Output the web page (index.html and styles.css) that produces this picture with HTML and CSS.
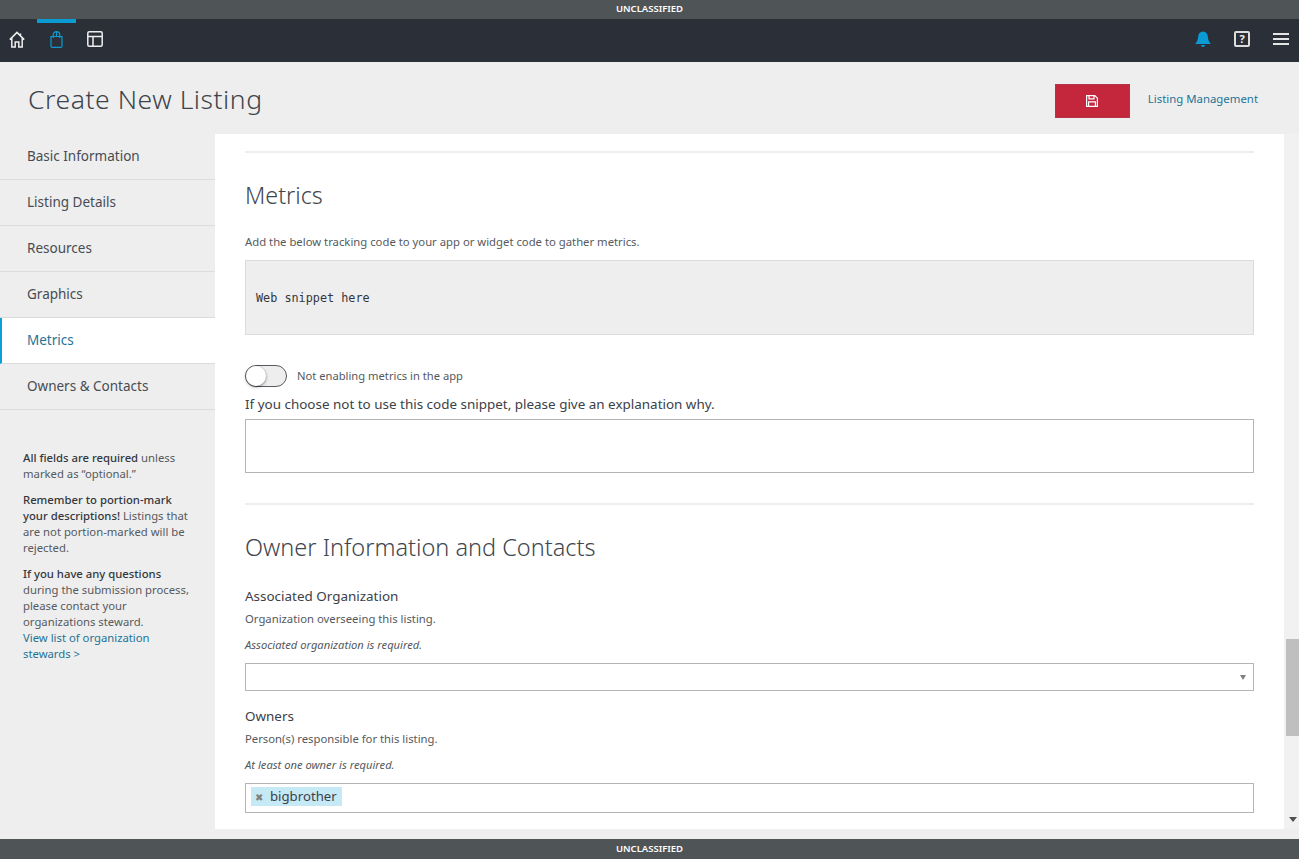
FILE: index.html
```html
<!DOCTYPE html>
<html lang="en">
<head>
    <meta charset="UTF-8">
    <meta name="viewport" content="width=device-width, initial-scale=1.0">
    <title>Create New Listing</title>
    <link rel="stylesheet" href="styles.css">
</head>
<body>
    <div class="banner">UNCLASSIFIED</div>
    <nav class="topnav">
        <div class="nav-left">
            <a class="nav-item">
                <svg width="16" height="17" viewBox="0 0 16 17" fill="none" stroke="#eee" stroke-width="1.5"><path d="M.8 8.6 8 1.4l7.2 7.2M2.8 7v9h3.4v-5h3.6v5h3.4V7M11.5 2.5v2.6"/></svg>
            </a>
            <a class="nav-item active">
                <svg width="13" height="17" viewBox="0 0 13 17" fill="none" stroke="#0a9bd3" stroke-width="1.2"><path d="M1 5.5h11v9.7a1.2 1.2 0 0 1-1.2 1.2H2.2A1.2 1.2 0 0 1 1 15.200zM3.300 7V3.500a3.200 2.900 0 0 1 6.400 0V7M6.500 1v4"/></svg>
            </a>
            <a class="nav-item">
                <svg width="16" height="16" viewBox="0 0 16 16" fill="none" stroke="#eee" stroke-width="1.5"><rect x=".8" y=".8" width="14.400" height="14.400" rx="1.500"/><path d="M.8 5.500h14.400M6 5.500v9.700"/></svg>
            </a>
        </div>
        <div class="nav-right">
            <svg width="16" height="16" viewBox="0 0 16 16" fill="#0a9bd3"><path d="M8 .5c3 0 4.600 2.200 4.800 5 .2 3.200 1 5.200 3 7.500H.2c2-2.300 2.800-4.300 3-7.500C3.400 2.700 5 .5 8 .5zM6 14h4a2 2 0 0 1-4 0z"/></svg>
            <span class="help-icon">?</span>
            <span class="burger"><i></i><i></i><i></i></span>
        </div>
    </nav>

    <header class="page-head">
        <h1>Create New Listing</h1>
        <div class="head-actions">
            <button class="save-btn" type="button">
                <svg width="12" height="12" viewBox="0 0 12 12" fill="none" stroke="#fff" stroke-width="1.200"><path d="M.6.6h8.200l2.600 2.600v8.200H.6zM3 .6v3.200h5V.6M2.600 11.400V6.800h6.800v4.600"/></svg>
            </button>
            <a class="manage-link">Listing Management</a>
        </div>
    </header>

    <div class="main">
        <aside class="sidebar">
            <ul class="side-menu">
                <li>Basic Information</li>
                <li>Listing Details</li>
                <li>Resources</li>
                <li>Graphics</li>
                <li class="current">Metrics</li>
                <li>Owners &amp; Contacts</li>
            </ul>
            <div class="side-note">
                <p><b>All fields are required</b> unless<br>marked as “optional.”</p>
                <p><b>Remember to portion-mark<br>your descriptions!</b> Listings that<br>are not portion-marked will be<br>rejected.</p>
                <p><b>If you have any questions</b><br>during the submission process,<br>please contact your<br>organizations steward.<br><a>View list of organization<br>stewards &gt;</a></p>
            </div>
        </aside>

        <section class="content">
            <hr class="rule first">
            <h2 class="metrics-title">Metrics</h2>
            <p class="help">Add the below tracking code to your app or widget code to gather metrics.</p>
            <pre class="snippet">Web snippet here</pre>
            <div class="toggle-row">
                <span class="toggle"><span class="knob"></span></span>
                <span class="toggle-label">Not enabling metrics in the app</span>
            </div>
            <label class="field-label why">If you choose not to use this code snippet, please give an explanation why.</label>
            <div class="textarea"></div>
            <hr class="rule second">
            <h2 class="owner-title">Owner Information and Contacts</h2>

            <label class="field-label">Associated Organization</label>
            <p class="help tight">Organization overseeing this listing.</p>
            <p class="error">Associated organization is required.</p>
            <div class="select"><span class="caret"></span></div>

            <label class="field-label owners">Owners</label>
            <p class="help tight">Person(s) responsible for this listing.</p>
            <p class="error">At least one owner is required.</p>
            <div class="tags"><span class="tag"><span class="tag-x">✖</span>bigbrother</span></div>
        </section>

        <div class="scrollbar">
            <span class="thumb"></span>
            <span class="arrow"></span>
        </div>
    </div>

    <div class="banner bottom">UNCLASSIFIED</div>
</body>
</html>
```

FILE: styles.css
```css
html, body {
    height: 100%;
}
body {
    margin: 0;
    height: 859px;
    overflow: hidden;
    display: flex;
    flex-direction: column;
    font-family: 'Noto Sans', 'Open Sans', sans-serif;
    background-color: #eee;
    color: #3c4148;
}
.banner {
    height: 19px;
    line-height: 18px;
    flex: none;
    background-color: #4f5557;
    color: #fff;
    text-align: center;
    font-size: 9.500px;
    font-weight: 600;
}
.banner.bottom {
    height: 20px;
    line-height: 20px;
    margin-top: 10px;
}

.topnav {
    height: 43px;
    flex: none;
    display: flex;
    justify-content: space-between;
    background-color: #2b3038;
}
.nav-left {
    display: flex;
}
.nav-item {
    width: 39px;
    display: flex;
    align-items: center;
    justify-content: center;
    border-top: 4px solid transparent;
    padding-bottom: 7px;
    box-sizing: border-box;
}
.nav-item:first-child {
    width: 37px;
    padding-right: 3px;
}
.nav-item:last-child {
    padding-right: 1px;
}
.nav-item.active {
    border-top-color: #0a9bd3;
}
.nav-right {
    display: flex;
    align-items: center;
    gap: 23px;
    padding-right: 10px;
    padding-bottom: 3px;
}
.help-icon {
    width: 12px;
    height: 12px;
    border: 2px solid #dcdcdc;
    border-radius: 2px;
    color: #eee;
    font-size: 11px;
    font-weight: 700;
    line-height: 12px;
    text-align: center;
}
.burger {
    width: 16px;
    display: flex;
    flex-direction: column;
    gap: 3px;
}
.burger i {
    height: 2px;
    background-color: #e4e4e4;
}

.page-head {
    height: 72px;
    flex: none;
    display: flex;
    justify-content: space-between;
    align-items: center;
    padding: 0 41px 0 28px;
}
h1 {
    margin: 1px 0 0;
    font-size: 26.500px;
    font-weight: 300;
    color: #3f444b;
    letter-spacing: .55px;
}
.head-actions {
    display: flex;
    align-items: center;
    gap: 18px;
}
.save-btn {
    width: 75px;
    height: 34px;
    margin-top: 6px;
    padding: 0;
    background-color: #c4273c;
    border: 1px solid #b3344a;
    display: flex;
    align-items: center;
    justify-content: center;
}
.manage-link {
    color: #1f7396;
    font-size: 11.400px;
}

.main {
    flex: 1;
    min-height: 0;
    display: flex;
    position: relative;
}
.sidebar {
    width: 215px;
    flex: none;
}
.side-menu {
    list-style: none;
    margin: 0;
    padding: 0;
}
.side-menu li {
    height: 45px;
    line-height: 44px;
    padding-left: 27px;
    border-bottom: 1px solid #dcdcdc;
    font-size: 13.500px;
    color: #474c53;
}
.side-menu li.current {
    background-color: #fff;
    color: #1f7396;
    border-left: 2px solid #0aa0d8;
    padding-left: 25px;
}
.side-note {
    margin-top: 40px;
    padding: 0 10px 0 23px;
    font-size: 11.300px;
    line-height: 16px;
    color: #555a60;
}
.side-note p {
    margin: 0 0 10px;
}
.side-note b {
    font-weight: 500;
    color: #33373d;
}
.side-note a {
    color: #1f7396;
}

.content {
    flex: 1;
    background-color: #fff;
    padding: 0 30px;
    overflow: hidden;
}
.rule {
    border: none;
    border-top: 2px solid #eee;
    margin: 0;
}
.rule.first {
    margin-top: 17px;
}
h2 {
    margin: 0;
    font-weight: 300;
    color: #41464d;
}
.metrics-title {
    font-size: 23.300px;
    line-height: 30px;
    margin-top: 27px;
}
.owner-title {
    font-size: 23.500px;
    line-height: 32px;
    margin-top: 26px;
}
.help {
    margin: 0;
    font-size: 11.300px;
    line-height: 16px;
    color: #555a60;
}
.metrics-title + .help {
    margin-top: 24px;
}
.snippet {
    margin: 10px 0 0;
    height: 75px;
    box-sizing: border-box;
    padding-left: 10px;
    line-height: 75px;
    background-color: #eee;
    border: 1px solid #dcdcdc;
    font-family: 'DejaVu Sans Mono', 'Liberation Mono', monospace;
    font-size: 11.800px;
    color: #33373d;
}
.toggle-row {
    display: flex;
    align-items: center;
    gap: 10px;
    margin-top: 30px;
}
.toggle {
    width: 42px;
    height: 22px;
    box-sizing: border-box;
    border: 1px solid #555a60;
    border-radius: 11px;
    background-color: #eee;
    display: block;
    position: relative;
}
.knob {
    position: absolute;
    left: 0;
    top: 0;
    width: 20px;
    height: 20px;
    border-radius: 50%;
    background-color: #fff;
    box-shadow: 0 1px 3px rgba(0, 0, 0, .5);
}
.toggle-label {
    font-size: 11.200px;
    color: #555a60;
    padding-bottom: 2px;
}
.field-label {
    display: block;
    font-size: 13.450px;
    line-height: 20px;
    color: #3c4148;
}
.field-label.why {
    margin-top: 7px;
}
.textarea {
    height: 54px;
    box-sizing: border-box;
    margin-top: 5px;
    border: 1px solid #b5b5b5;
}
.rule.second {
    margin-top: 30px;
}
.owner-title + .field-label {
    margin-top: 23px;
}
.help.tight {
    margin-top: 5px;
}
.error {
    margin: 10px 0 0;
    font-size: 11.200px;
    line-height: 16px;
    font-style: italic;
    color: #555a60;
}
.select {
    height: 28px;
    box-sizing: border-box;
    margin-top: 10px;
    border: 1px solid #b5b5b5;
    position: relative;
}
.caret {
    position: absolute;
    right: 7px;
    top: 11px;
    border-left: 3px solid transparent;
    border-right: 3px solid transparent;
    border-top: 5px solid #808080;
}
.field-label.owners {
    margin-top: 15px;
}
.tags {
    height: 30px;
    box-sizing: border-box;
    margin-top: 10px;
    border: 1px solid #b5b5b5;
    padding: 3px 5px;
    display: flex;
    align-items: flex-start;
}
.tag {
    height: 19px;
    line-height: 18px;
    padding: 0 5px 0 3px;
    background-color: #c6e9f6;
    font-size: 13.200px;
    color: #3c4148;
}
.tag-x {
    font-size: 10px;
    color: #808080;
    margin-right: 7px;
    margin-left: 1px;
}

.scrollbar {
    width: 15px;
    flex: none;
    background-color: #f1f1f1;
    position: relative;
}
.thumb {
    position: absolute;
    left: 2px;
    right: 0;
    top: 505px;
    height: 97px;
    background-color: #bfbfbf;
}
.arrow {
    position: absolute;
    left: 5px;
    bottom: 7px;
    border-left: 4px solid transparent;
    border-right: 4px solid transparent;
    border-top: 5px solid #505050;
}
```
